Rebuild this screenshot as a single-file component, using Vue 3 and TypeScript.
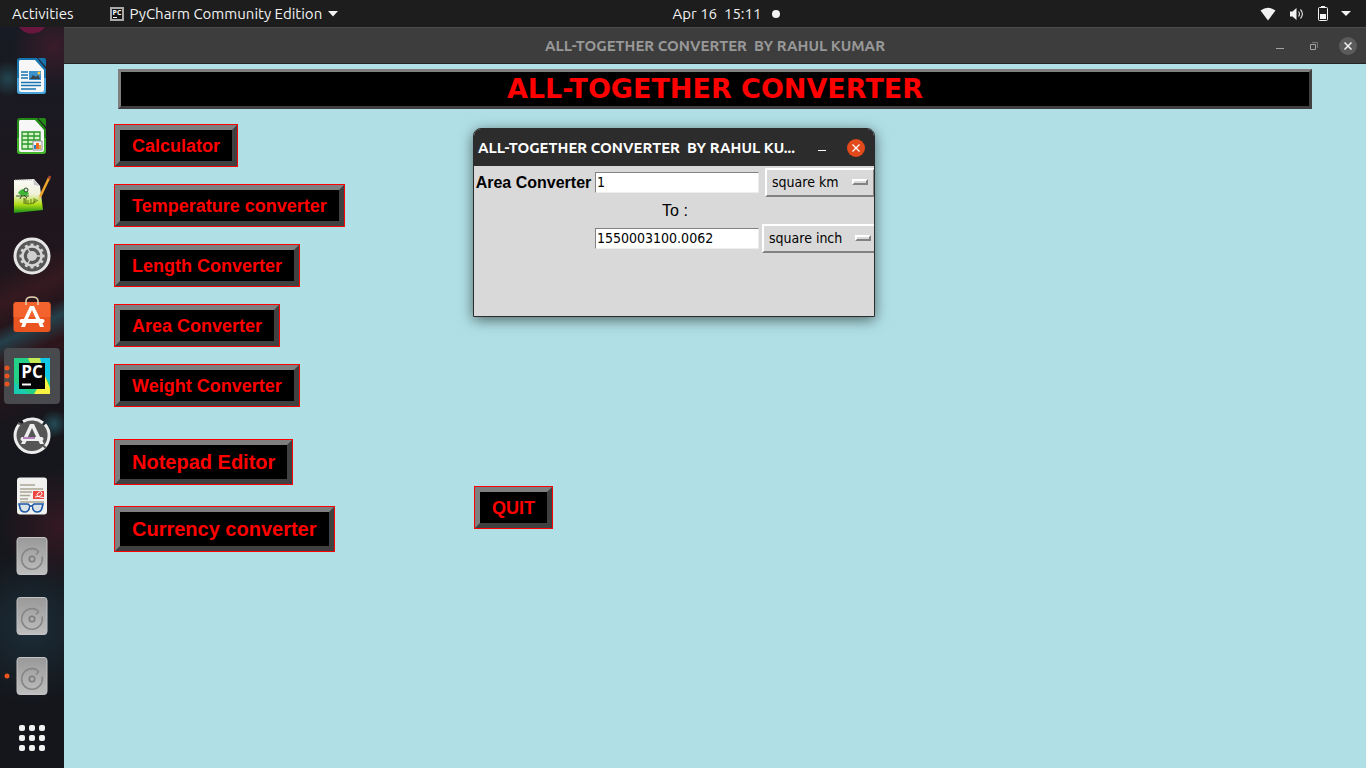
<script setup lang="ts">
import { ref } from 'vue'

const appTitle = 'ALL-TOGETHER CONVERTER  BY RAHUL KUMAR'
const shortTitle = 'ALL-TOGETHER CONVERTER  BY RAHUL KU...'
const tools: string[] = [
  'Calculator',
  'Temperature converter',
  'Length Converter',
  'Area Converter',
  'Weight Converter',
]
const largeTools: string[] = ['Notepad Editor', 'Currency converter']
const units: string[] = ['square km', 'square inch']

const amount = ref('1')
const result = ref('1550003100.0062')
const fromUnit = ref('square km')
const toUnit = ref('square inch')

const disks: { name: string; running: boolean }[] = [
  { name: 'Disk 1', running: false },
  { name: 'Disk 2', running: false },
  { name: 'Disk 3', running: true },
]
const gridDots = [0, 1, 2, 3, 4, 5, 6, 7, 8]
const teeth = [0, 30, 60, 90, 120, 150, 180, 210, 240, 270, 300, 330]
</script>

<template>
  <div class="desktop">
    <header class="topbar">
      <div class="side">
        <button class="bar-item" type="button">Activities</button>
        <button class="bar-item app-menu" type="button">
          <svg width="14" height="14" viewBox="0 0 14 14" aria-hidden="true">
            <rect width="14" height="14" fill="#a9a9a9" />
            <rect x="2" y="2" width="10" height="10" fill="#151515" />
            <text class="logo-text" x="7" y="8" font-size="7" text-anchor="middle">PC</text>
            <path d="M3 10.500h4" stroke="#fff" />
          </svg>
          <span>PyCharm Community Edition</span>
          <svg width="10" height="6" viewBox="0 0 10 6" aria-hidden="true"><path d="M0 0h10L5 5.500z" fill="#f2f2f2" /></svg>
        </button>
      </div>
      <button class="bar-item clock" type="button">Apr 16&nbsp; 15:11<span class="notice"></span></button>
      <div class="side status">
        <svg width="16" height="14" viewBox="0 0 16 14" aria-label="Wi-Fi"><path d="M0.500 3.500Q8-2 15.500 3.500L8 13.500z" fill="#f2f2f2" /></svg>
        <svg width="16" height="14" viewBox="0 0 16 14" aria-label="Volume">
          <path d="M1 4.500h2.500L7.500 1v12L3.500 9.500H1z" fill="#f2f2f2" />
          <path d="M9.500 4.500q2 2.500 0 5M11.500 2.500q3.800 4.500 0 9" fill="none" stroke="#d8d8d8" stroke-width="1.200" />
        </svg>
        <svg width="10" height="16" viewBox="0 0 10 16" aria-label="Battery">
          <path d="M3 0h4v2H3z" fill="#f2f2f2" />
          <rect x="0.500" y="1.500" width="9" height="13" rx="1" fill="none" stroke="#f2f2f2" />
          <path d="M2 8h6v5H2z" fill="#f2f2f2" />
        </svg>
        <svg width="10" height="6" viewBox="0 0 10 6" aria-hidden="true"><path d="M0 0h10L5 5z" fill="#f2f2f2" /></svg>
      </div>
    </header>

    <div class="workspace">
      <nav class="dock" aria-label="Dock">
        <button class="tile" type="button" aria-label="Writer">
          <svg width="48" height="48" viewBox="0 0 48 48">
            <path d="M12 6h17l9 11v22q0 3-3 3H12q-3 0-3-3V9q0-3 3-3z" fill="#1675ae" />
            <path d="M9 26h29v13q0 3-3 3H12q-3 0-3-3z" fill="#4ba4dc" />
            <path d="M30 6h6q2 0 2 2v7z" fill="#1675ae" />
            <path d="M12 8h15l9 10v20q0 2-2 2H13q-2 0-2-2V9z" fill="#f7f7f7" />
            <path d="M13 20h7M13 23h7M13 26h7M13 30.500h20M13 33.500h20M13 37h15" stroke="#1675ae" stroke-width="1.400" />
            <rect x="21" y="19" width="12" height="9" fill="#3b91cc" />
            <path d="M22 27l3-4 3 2 2-2 2 4z" fill="#3d4448" />
            <circle cx="31" cy="21" r="1.500" fill="#ffc93c" />
          </svg>
        </button>
        <button class="tile" type="button" aria-label="Calc">
          <svg width="48" height="48" viewBox="0 0 48 48">
            <path d="M12 6h17l9 11v22q0 3-3 3H12q-3 0-3-3V9q0-3 3-3z" fill="#258b18" />
            <path d="M9 26h29v13q0 3-3 3H12q-3 0-3-3z" fill="#43b32b" />
            <path d="M30 6h6q2 0 2 2v7z" fill="#258b18" />
            <path d="M12 8h15l9 10v20q0 2-2 2H13q-2 0-2-2V9z" fill="#f7f7f7" />
            <path d="M14 20h18v17H14z" fill="#d6f3c9" />
            <path d="M14 20h18v17H14zM14 24h18M14 28h18M14 32h18M20 20v17M26 20v17" fill="none" stroke="#279727" stroke-width="1.300" />
            <path d="M25 29h9v9h-9z" fill="#f4f4f4" stroke="#909090" />
            <path d="M26 33h2v4h-2z" fill="#2581c4" />
            <path d="M28 31h3v6h-3z" fill="#ef681e" />
            <path d="M31 33h2v4h-2z" fill="#e6ac50" />
          </svg>
        </button>
        <button class="tile" type="button" aria-label="Notepad">
          <svg width="48" height="48" viewBox="0 0 48 48">
            <defs>
              <linearGradient id="sheet" x1="0" y1="0" x2="0" y2="1">
                <stop offset="0" stop-color="#fcfcfa" />
                <stop offset="0.450" stop-color="#eff0d6" />
                <stop offset="0.750" stop-color="#b0dc15" />
                <stop offset="1" stop-color="#168f16" />
              </linearGradient>
            </defs>
            <path d="M6 8l20-1 6 7 3 24-29 3z" fill="url(#sheet)" />
            <path d="M25 7l1 6 6 1z" fill="#c7c7c5" />
            <path d="M7 8h17" stroke="#aaa" stroke-dasharray="1 1" />
            <path d="M10 21q4-6 9-3l2 4q-5 4-10 0z" fill="#40b737" />
            <circle cx="18" cy="18" r="2" fill="#ddebdd" stroke="#244e25" />
            <path d="M8 24h13M14 23l-2 4M16 23l3 3" stroke="#32572a" />
            <path d="M16 32V26l2 5v-5M20 28v4M23 27v5M26 26v5M16 31q7 3 14-3M28 27l-3 5" fill="none" stroke="#68851b" />
            <path d="M41 6L32 25" stroke="#eda52b" stroke-width="2.500" />
            <path d="M42 4l-1 3" stroke="#ad4931" stroke-width="2.500" />
            <path d="M32 24l-2 5 3-4z" fill="#e7bb62" />
          </svg>
        </button>
        <button class="tile" type="button" aria-label="Settings">
          <svg width="48" height="48" viewBox="0 0 48 48">
            <circle cx="24" cy="24" r="17" fill="#575757" stroke="#e6e6e6" stroke-width="3" />
            <circle cx="24" cy="24" r="9.500" fill="none" stroke="#d4d4d4" stroke-width="2.500" />
            <path v-for="angle in teeth" :key="angle" d="M24 11.500v3" stroke="#d4d4d4" stroke-width="3" :transform="`rotate(${angle} 24 24)`" />
            <circle cx="24" cy="24" r="5" fill="#cfcfcf" />
            <path d="M24 24h10M24 24l-5-9M24 24l-5 9" stroke="#cfcfcf" stroke-width="1.500" />
          </svg>
        </button>
        <button class="tile" type="button" aria-label="Software">
          <svg width="48" height="48" viewBox="0 0 48 48">
            <rect x="5.500" y="10" width="37" height="30" rx="3" fill="#e95420" />
            <path d="M8.500 10h31q3 0 3 3v12h-37V13q0-3 3-3z" fill="#f4632e" />
            <path d="M18 13V9q0-4 6-4t6 4v4" fill="none" stroke="#e5d6b3" stroke-width="1.500" />
            <path d="M22 14h4l7 15h-4l-5-11-5 11h-4z" fill="#fff" />
            <path d="M13.500 29h21" stroke="#fff" stroke-width="4" stroke-linecap="round" />
            <path d="M13 35l2-5h4l-2 5zM30 30h4l2 5h-4z" fill="#fff" />
          </svg>
        </button>
        <button class="tile active" type="button" aria-label="PyCharm">
          <svg class="running" width="6" height="22" viewBox="0 0 6 22">
            <circle cx="3" cy="3" r="2.500" fill="#e95420" /><circle cx="3" cy="11" r="2.500" fill="#e95420" /><circle cx="3" cy="19" r="2.500" fill="#e95420" />
          </svg>
          <svg width="48" height="48" viewBox="0 0 48 48">
            <path d="M6 6h36v36H6z" fill="#24cf87" />
            <path d="M20 6h14v5H22z" fill="#c6e956" />
            <path d="M32 6h10v24l-6-6z" fill="#10c7e8" />
            <path d="M37 24l5 12v6H26z" fill="#f8f241" />
            <path d="M6 30l16 12H6z" fill="#1bcbb0" />
            <path d="M11 11h26v26H11z" fill="#050505" />
            <text class="logo-text" x="24" y="26" font-size="17" text-anchor="middle">PC</text>
            <path d="M14 32.500h9" stroke="#fff" stroke-width="2" />
          </svg>
        </button>
        <button class="tile" type="button" aria-label="Software Updater">
          <svg width="48" height="48" viewBox="0 0 48 48">
            <circle cx="24" cy="24" r="16" fill="#555" />
            <path d="M12 11.500a17 17 0 1 0 25 1M35 11A17 17 0 0 0 15 9.500" fill="none" stroke="#ececec" stroke-width="3" />
            <path d="M10 11l6 3M38 36l-5-4" stroke="#555" stroke-width="2" />
            <path d="M22 12h4l7 15h-4l-5-11-5 11h-4z" fill="#eee" />
            <path d="M14.500 27h19" stroke="#eee" stroke-width="4" stroke-linecap="round" />
            <path d="M15 26h12" stroke="#a25caf" stroke-width="1.500" />
            <path d="M13 32l2-4h4l-2 4zM30 28h4l2 4h-4z" fill="#eee" />
          </svg>
        </button>
        <button class="tile" type="button" aria-label="Document Viewer">
          <svg width="48" height="48" viewBox="0 0 48 48">
            <rect x="9" y="5.500" width="30" height="37" rx="3" fill="#f1f1f0" />
            <path d="M12 13h15M12 17h23M12 20h12M12 23.500h10M12 27h8M12 30h24" stroke="#aaa795" stroke-width="1.300" />
            <path d="M25 19h11v8H25z" fill="#ee4742" />
            <path d="M27 25q8-1 7-4t-4 0 2 4 4 0" fill="none" stroke="#fff" />
            <path d="M11 32h9l2 2h2l2-2h9l-1 4q-1 4-5 4-4 0-5-6h-2q-1 6-5 6-4 0-5-4z" fill="#d9e2e6" stroke="#1d58a6" stroke-width="1.600" />
            <path d="M22 35h2v5h-2z" fill="#f1f1f0" />
          </svg>
        </button>
        <button v-for="disk in disks" :key="disk.name" class="tile" type="button" :aria-label="disk.name">
          <svg v-if="disk.running" class="running" width="6" height="6" viewBox="0 0 6 6"><circle cx="3" cy="3" r="2.500" fill="#e95420" /></svg>
          <svg width="48" height="48" viewBox="0 0 48 48">
            <defs>
              <linearGradient id="metal" x1="0" y1="0" x2="0" y2="1">
                <stop offset="0" stop-color="#999" /><stop offset="1" stop-color="#bebebe" />
              </linearGradient>
            </defs>
            <rect x="9" y="5.500" width="30" height="37" rx="3" fill="url(#metal)" stroke="#c4c4c4" />
            <path d="M34 24.500A10.300 10.300 0 1 1 29 18l1.500 2-2.500 2.500" fill="none" stroke="#858585" stroke-width="1.600" />
            <circle cx="24" cy="27" r="2.700" fill="none" stroke="#7c7c7c" stroke-width="1.600" />
          </svg>
        </button>
        <button class="tile apps" type="button" aria-label="Show Applications">
          <span v-for="dot in gridDots" :key="dot" class="dot"></span>
        </button>
      </nav>

      <main class="window">
        <div class="titlebar">
          <h1 class="window-title">{{ appTitle }}</h1>
          <div class="controls">
            <button type="button" aria-label="Minimize">
              <svg width="8" height="8" viewBox="0 0 8 8"><path d="M0 6.500h8" stroke="#a5a5a5" /></svg>
            </button>
            <button type="button" aria-label="Restore">
              <svg width="8" height="8" viewBox="0 0 8 8"><path d="M0.500 2.500h5v5h-5z" fill="none" stroke="#a5a5a5" /><path d="M2 0.500h5.500V6" fill="none" stroke="#777" /></svg>
            </button>
            <button class="close" type="button" aria-label="Close">
              <svg width="8" height="8" viewBox="0 0 8 8"><path d="M0.500 0.500l7 7M7.500 0.500l-7 7" stroke="#f2f2f2" stroke-width="1.500" /></svg>
            </button>
          </div>
        </div>

        <div class="canvas">
          <h2 class="banner">ALL-TOGETHER CONVERTER</h2>
          <div class="launchers">
            <div class="tools">
              <button v-for="tool in tools" :key="tool" class="bevel" type="button">{{ tool }}</button>
              <div class="large-tools">
                <button v-for="tool in largeTools" :key="tool" class="bevel large" type="button">{{ tool }}</button>
              </div>
            </div>
            <button class="bevel quit" type="button">QUIT</button>
          </div>
        </div>
      </main>
    </div>

    <section class="popup" aria-label="Area Converter">
      <div class="popup-bar">
        <span class="popup-title">{{ shortTitle }}</span>
        <button type="button" aria-label="Minimize window">
          <svg width="8" height="8" viewBox="0 0 8 8"><path d="M0 6.500h8" stroke="#fff" /></svg>
        </button>
        <button class="popup-close" type="button" aria-label="Close window">
          <svg width="8" height="8" viewBox="0 0 8 8"><path d="M0.500 0.500l7 7M7.500 0.500l-7 7" stroke="#fff" stroke-width="1.300" /></svg>
        </button>
      </div>
      <form class="form" @submit.prevent>
        <label class="name" for="amount">Area Converter</label>
        <input id="amount" v-model="amount" class="entry" type="text" />
        <span class="option">
          <select v-model="fromUnit" aria-label="From unit"><option v-for="unit in units" :key="unit">{{ unit }}</option></select>
          <span class="knob"></span>
        </span>
        <label class="to" for="result">To :</label>
        <input id="result" v-model="result" class="entry second" type="text" />
        <span class="option wide">
          <select v-model="toUnit" aria-label="To unit"><option v-for="unit in units" :key="unit">{{ unit }}</option></select>
          <span class="knob"></span>
        </span>
      </form>
    </section>
  </div>
</template>

<style>
body {
  margin: 0;
}
</style>

<style scoped>
* {
  box-sizing: border-box;
}

.desktop {
  position: relative;
  display: flex;
  flex-direction: column;
  height: 100vh;
  overflow: hidden;
  background: #1d1d1d;
  font-family: "Ubuntu", "Noto Sans", sans-serif;
}

button {
  margin: 0;
  padding: 0;
  border: 0;
  background: none;
  color: inherit;
  font: inherit;
}

svg {
  display: block;
  flex: none;
}

.logo-text {
  fill: #fff;
  font-family: "Open Sans", sans-serif;
  font-weight: 700;
}

.topbar {
  display: flex;
  flex: none;
  align-items: center;
  height: 27px;
  padding: 0 15px 0 12px;
  color: #f2f2f2;
  font-size: 15px;
  line-height: 26px;
}

.side {
  display: flex;
  flex: 1;
  align-items: center;
}

.app-menu {
  display: flex;
  align-items: center;
  gap: 6px;
  margin-left: 36px;
}

.clock {
  display: flex;
  align-items: center;
  gap: 11px;
  margin-left: 90px;
  white-space: pre;
}

.notice {
  width: 8px;
  height: 8px;
  border-radius: 50%;
  background: #f2f2f2;
}

.status {
  justify-content: flex-end;
  gap: 13px;
}

.workspace {
  display: flex;
  flex: 1;
  min-height: 0;
}

.dock {
  display: flex;
  flex: none;
  flex-direction: column;
  gap: 4px;
  width: 64px;
  padding: 21px 4px 0;
  background:
    radial-gradient(circle at 32px -10px, #6a1740 0 16px, transparent 17px),
    radial-gradient(circle at 8px 52px, #234650, transparent 18px),
    radial-gradient(circle at 54px 20px, #3a1c2a, transparent 42px),
    linear-gradient(155deg, transparent 32%, #351a20 36%, #25151b 39%, #24404a 41%, #2d161b 44%, transparent 52%),
    radial-gradient(circle at 54px 397px, #244c56, transparent 14px),
    radial-gradient(circle at 60px 500px, #341822, transparent 60px),
    radial-gradient(circle at 30px 600px, #1b2d38, transparent 75px),
    linear-gradient(#171b23, #20151c 30%, #15171c 60%, #14161b);
}

.tile {
  position: relative;
  display: flex;
  flex: none;
  align-items: center;
  justify-content: center;
  width: 56px;
  height: 56px;
  border-radius: 4px;
}

.active {
  background: #484a4d;
}

.running {
  position: absolute;
  left: 0;
}

.apps {
  display: grid;
  grid-template-columns: repeat(3, 6px);
  gap: 4px;
  align-content: center;
  margin-top: 2px;
}

.dot {
  width: 6px;
  height: 6px;
  border-radius: 2px;
  background: #f2f2f2;
}

.window {
  display: flex;
  flex: 1;
  flex-direction: column;
  min-width: 0;
}

.titlebar {
  position: relative;
  display: flex;
  flex: none;
  align-items: center;
  justify-content: center;
  height: 37px;
  border-top: 1px solid #4c4c4c;
  border-bottom: 1px solid #242424;
  background: #3d3d3d;
}

.window-title {
  margin: 0;
  color: #989898;
  font-size: 15px;
  line-height: 20px;
  white-space: pre;
}

.controls {
  position: absolute;
  right: 9px;
  display: flex;
  gap: 16px;
}

.controls button {
  display: flex;
  align-items: center;
  justify-content: center;
  width: 18px;
  height: 18px;
  border-radius: 50%;
}

.controls .close {
  background: #5b5b5b;
}

.canvas {
  flex: 1;
  padding: 5px 54px 0;
  background: #b0e0e6;
}

.banner {
  margin: 0;
  border: 3px solid;
  border-color: #7f7f7f #404040 #404040 #7f7f7f;
  background: #000;
  color: #f00;
  font: bold 27px/34px "DejaVu Sans", sans-serif;
  text-align: center;
}

.launchers {
  display: flex;
  margin: 16px 0 0 -3px;
}

.tools {
  display: flex;
  flex-direction: column;
  gap: 19px;
  align-items: flex-start;
  width: 360px;
}

.large-tools {
  display: flex;
  flex-direction: column;
  gap: 23px;
  align-items: flex-start;
  margin-top: 15px;
}

.bevel {
  padding: 2px 12px 0;
  border: 5px solid;
  border-color: #7f7f7f #404040 #404040 #7f7f7f;
  outline: 1px solid #f00;
  background: #000;
  color: #f00;
  font: bold 18px/29px "Liberation Sans", sans-serif;
}

.large {
  padding-top: 0;
  font-size: 20px;
  line-height: 34px;
}

.quit {
  align-self: flex-end;
  margin-bottom: 23px;
}

.popup {
  position: absolute;
  top: 128px;
  left: 473px;
  width: 402px;
  overflow: hidden;
  border: 1px solid #2c2c2c;
  border-radius: 8px 8px 0 0;
  background: #d9d9d9;
  box-shadow: 0 3px 14px rgb(0 0 0 / 55%);
}

.popup-bar {
  display: flex;
  align-items: center;
  height: 37px;
  padding: 0 9px 0 4px;
  background: #2c2c2c;
  color: #fff;
}

.popup-title {
  flex: none;
  width: 335px;
  font-size: 15px;
  font-weight: bold;
  line-height: 20px;
  white-space: pre;
}

.popup-bar button {
  display: flex;
  flex: none;
  align-items: center;
  justify-content: center;
  width: 18px;
  height: 18px;
  border-radius: 50%;
}

.popup-bar .popup-close {
  margin-left: auto;
  background: #e2491b;
}

.form {
  display: grid;
  grid-template-rows: 32px 24px 32px;
  grid-template-columns: 119px 168px 118px;
  align-items: center;
  justify-items: center;
  height: 150px;
  color: #000;
  font-family: "DejaVu Sans Condensed", "DejaVu Sans", sans-serif;
  font-size: 14px;
}

.name {
  padding-top: 2px;
  font: bold 16px/20px "Liberation Sans", sans-serif;
}

.entry {
  width: 164px;
  height: 21px;
  padding: 0 1px;
  border: 1px solid;
  border-color: #828282 #ededed #ededed #828282;
  background: #fff;
  color: #000;
  font: inherit;
  outline: 0;
}

.to {
  grid-row: 2;
  grid-column: 2;
  padding: 2px 4px 0 0;
  font: 16px/20px "Liberation Sans", sans-serif;
}

.second {
  grid-row: 3;
  grid-column: 2;
}

.option {
  position: relative;
  display: flex;
  align-items: center;
  width: 110px;
}

.wide {
  grid-row: 3;
  grid-column: 3;
  width: 116px;
}

select {
  width: 100%;
  height: 29px;
  padding: 0 0 0 5px;
  appearance: none;
  border: 2px solid;
  border-color: #fff #828282 #828282 #fff;
  border-radius: 0;
  background: #d9d9d9;
  color: #000;
  font: inherit;
  outline: 0;
}

.knob {
  position: absolute;
  right: 7px;
  width: 16px;
  height: 6px;
  border: 2px solid;
  border-color: #fff #828282 #828282 #fff;
  pointer-events: none;
}
</style>
